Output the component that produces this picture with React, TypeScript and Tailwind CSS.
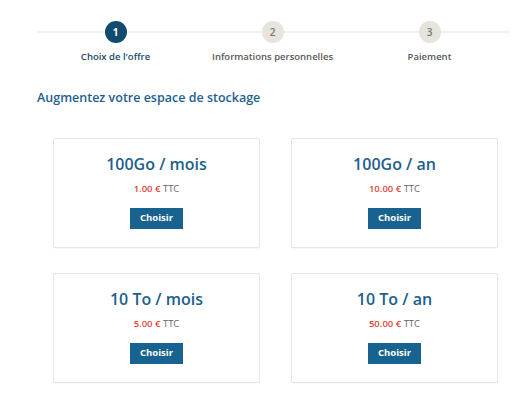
const steps = [
  { n: 1, label: "Choix de l'offre", active: true },
  { n: 2, label: 'Informations personnelles', active: false },
  { n: 3, label: 'Paiement', active: false },
];

const offers = [
  { title: '100Go / mois', price: '1.00 €' },
  { title: '100Go / an', price: '10.00 €' },
  { title: '10 To / mois', price: '5.00 €' },
  { title: '10 To / an', price: '50.00 €' },
];

function Stepper() {
  return (
    <div className="relative ml-[37px] flex w-[471px]">
      {/* track behind the circles */}
      <div className="absolute left-0 right-[-2px] top-[10px] h-[2px] bg-[#f0f0f0]" />
      {steps.map((s) => (
        <div key={s.n} className="relative flex flex-1 flex-col items-center">
          <div
            className={
              s.active
                ? 'flex h-[22px] w-[22px] items-center justify-center rounded-full bg-[#134b70] text-[10px] font-bold text-white'
                : 'flex h-[22px] w-[22px] items-center justify-center rounded-full bg-[#e6e4dc] text-[10px] font-semibold text-[#777]'
            }
          >
            {s.n}
          </div>
          <div
            className={
              s.active
                ? 'mt-[7px] text-[9.5px] font-semibold leading-[14px] text-[#1b4a6b]'
                : 'mt-[7px] text-[9.5px] font-semibold leading-[14px] text-[#5a5a5a]'
            }
          >
            {s.label}
          </div>
        </div>
      ))}
    </div>
  );
}

function OfferCard({ title, price }: { title: string; price: string }) {
  return (
    <div className="flex h-[110px] flex-col items-center rounded-[2px] border border-[#e6e6e6] bg-white shadow-[0_1px_1px_rgba(0,0,0,0.03)]">
      <div className="mt-[13px] text-[16px] font-semibold leading-[24px] text-[#1d5f8d]">
        {title}
      </div>
      <div className="mt-[6px] text-[9.5px] leading-[14px]">
        <span className="font-semibold text-[#e0463a]">{price}</span>{' '}
        <span className="text-[#666]">TTC</span>
      </div>
      <button
        type="button"
        className="mt-[12px] flex h-[21px] w-[53px] items-center justify-center bg-[#17628f] text-[9.5px] font-bold text-white"
      >
        Choisir
      </button>
    </div>
  );
}

export default function App() {
  return (
    <div
      className="h-[418px] w-[530px] overflow-hidden bg-white pt-[21px]"
      style={{ fontFamily: '"Open Sans", "Liberation Sans", sans-serif' }}
    >
      <Stepper />

      <h2 className="ml-[37px] mt-[25px] text-[12.5px] font-semibold leading-[18px] text-[#1d5f8d]">
        Augmentez votre espace de stockage
      </h2>

      <div className="ml-[53px] mt-[31px] grid w-[445px] grid-cols-2 gap-x-[31px] gap-y-[25px]">
        {offers.map((o) => (
          <OfferCard key={o.title} title={o.title} price={o.price} />
        ))}
      </div>
    </div>
  );
}
